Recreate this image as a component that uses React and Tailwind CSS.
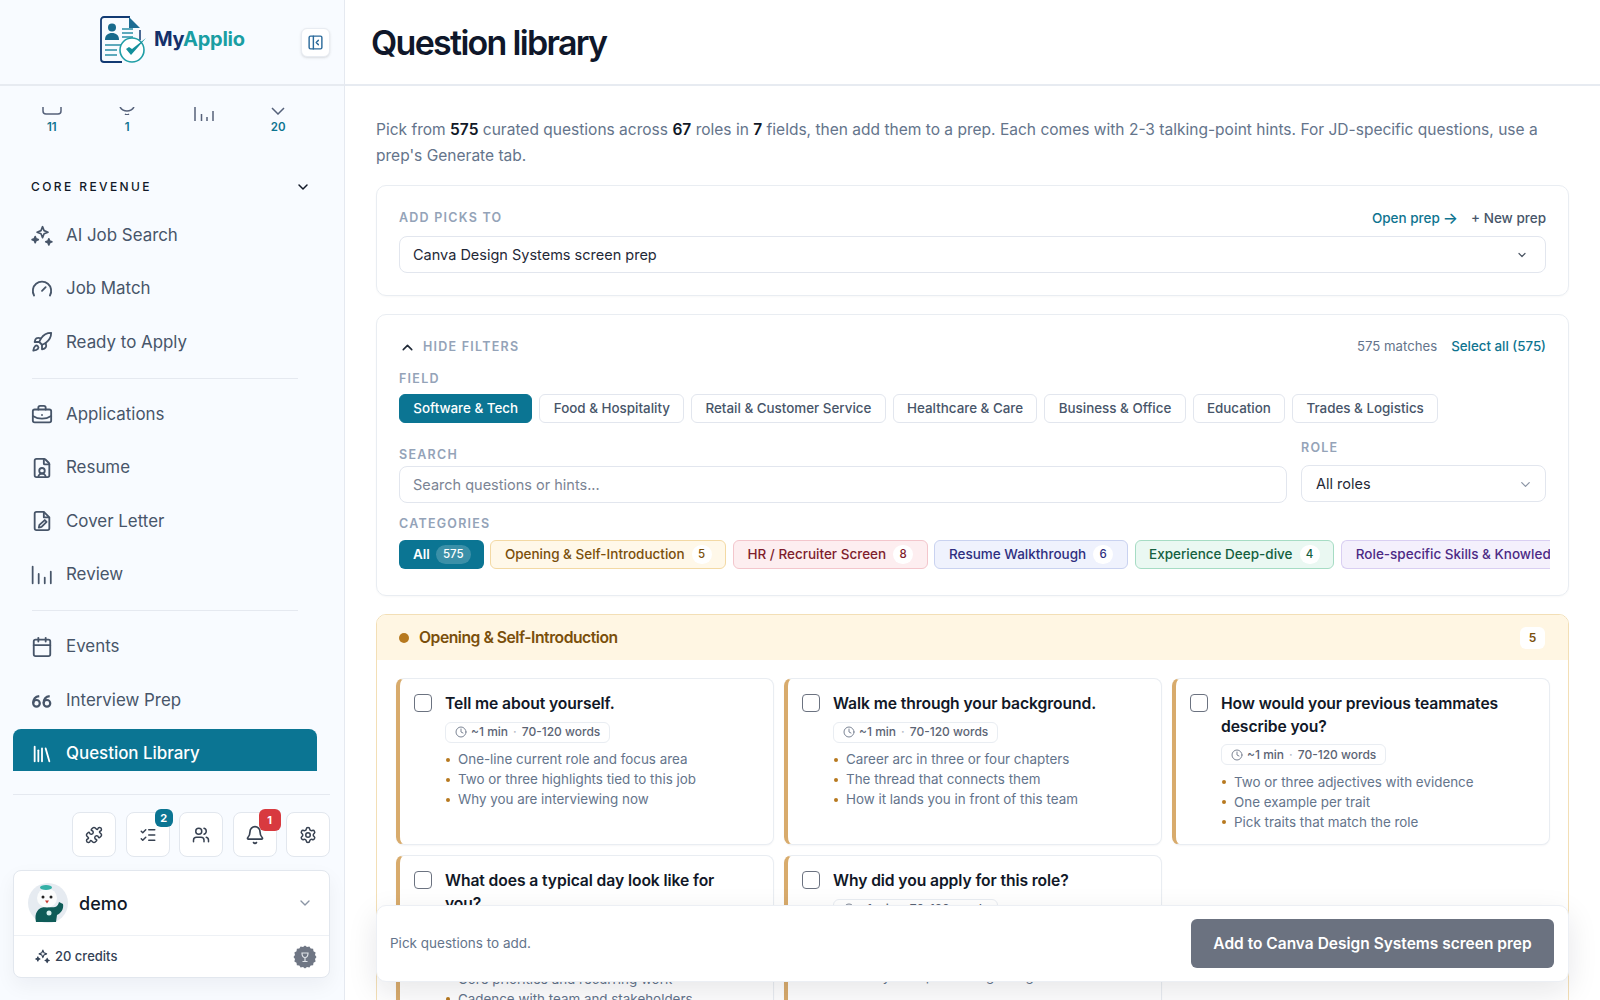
import {
  Rocket,
  Gauge,
  BriefcaseBusiness,
  FileUser,
  Calendar,
  Library,
  Puzzle,
  ListChecks,
  Users,
  Bell,
  Settings,
  ChevronDown,
  ChevronUp,
  PanelLeftClose,
  Clock,
} from 'lucide-react';

function Sparks({ size = 20, className = '' }) {
  return (
    <svg width={size} height={size} viewBox="0 0 20 20" fill="none" stroke="currentColor" strokeWidth="1.5" strokeLinejoin="round" className={className}>
      <path d="M10.5 1.5l1.4 3.6 3.6 1.4-3.6 1.4-1.4 3.6-1.4-3.6-3.6-1.4 3.6-1.4z" />
      <path d="M3.8 10.5l.8 2 2 .8-2 .8-.8 2-.8-2-2-.8 2-.8z" fill="currentColor" />
      <path d="M16.2 12.5l.8 2 2 .8-2 .8-.8 2-.8-2-2-.8 2-.8z" fill="currentColor" />
    </svg>
  );
}

function Bars({ size = 20, className = '' }) {
  return (
    <svg width={size} height={size} viewBox="0 0 20 20" fill="none" stroke="currentColor" strokeWidth="1.6" strokeLinecap="round" className={className}>
      <path d="M1.5 2.5v15" />
      <path d="M7 9v8.5" />
      <path d="M12.5 12.5v5" />
      <path d="M18 7v10.5" />
    </svg>
  );
}

function Quotes({ size = 20, className = '' }) {
  return (
    <svg width={size} height={size} viewBox="0 0 20 20" fill="none" stroke="currentColor" strokeWidth="2" className={className}>
      <circle cx="5" cy="13" r="3" />
      <path d="M2 13c0-4 1.500-6 5.500-6.500" />
      <circle cx="14.500" cy="13" r="3" />
      <path d="M11.500 13c0-4 1.500-6 5.500-6.500" />
    </svg>
  );
}

function CoverDoc({ size = 20, className = '' }) {
  return (
    <svg width={size} height={size} viewBox="0 0 24 24" fill="none" stroke="currentColor" strokeWidth="2" strokeLinejoin="round" className={className}>
      <path d="M14 2H6a2 2 0 0 0-2 2v16a2 2 0 0 0 2 2h12a2 2 0 0 0 2-2V8z" />
      <path d="M14 2v6h6" />
      <path d="M15 11l2 2-5.500 5.500-3 .7.700-3z" />
    </svg>
  );
}

function Logo() {
  return (
    <svg width="48" height="48" viewBox="0 0 48 48" fill="none">
      <path d="M31 1H5a3 3 0 0 0-3 3v39a3 3 0 0 0 3 3h18" stroke="#123a73" strokeWidth="1.800" />
      <path d="M30 1l11 11H30z" fill="#1c6c93" />
      <path d="M41 14v10" stroke="#123a73" strokeWidth="1.500" />
      <circle cx="13" cy="11.500" r="4" fill="#176a8c" />
      <path d="M6 24c0-5 3-7 7-7s7 2 7 7z" fill="#176a8c" />
      <path d="M23 13h11M23 17h11M23 21h11M6 29h17M6 34h12M6 39h12" stroke="#2a8fa6" strokeWidth="1.500" />
      <circle cx="33" cy="34" r="12" stroke="#1f9ea6" strokeWidth="1.600" fill="#fff" />
      <path d="M27 33l5 6 15-17-14 11-3-2z" fill="#14909b" />
    </svg>
  );
}

function Mascot() {
  return (
    <svg width="40" height="40" viewBox="0 0 40 40">
      <circle cx="20" cy="20" r="20" fill="#e6ebf1" />
      <path d="M8 39c-2-9 2-15 10-15s11 2 13-5l4 2c1 5-2 9-6 11l-1 7z" fill="#0f5c58" />
      <circle cx="21" cy="30" r="2.500" fill="#d8f1ee" />
      <ellipse cx="19" cy="15" rx="10" ry="9.500" fill="#fbfcfc" />
      <ellipse cx="18" cy="4.500" rx="6" ry="2.500" fill="#34b0a6" />
      <circle cx="15" cy="14" r="1.500" fill="#222" />
      <circle cx="23" cy="14" r="1.500" fill="#222" />
      <path d="M17 17.500h4l-2 3z" fill="#c8392f" />
    </svg>
  );
}

function Seal() {
  const pts = [];
  for (let i = 0; i < 32; i++) {
    const r = i % 2 ? 10.200 : 11.500;
    const a = (i * Math.PI) / 16;
    pts.push(`${12 + r * Math.cos(a)},${12 + r * Math.sin(a)}`);
  }
  return (
    <svg width="24" height="24" viewBox="0 0 24 24">
      <polygon points={pts.join(' ')} fill="#6f7684" />
      <path d="M9 8h6c0 3-1 4.500-3 4.500S9 11 9 8zM12 12.500V16M9.500 16.500h5" fill="none" stroke="#dfe3e8" strokeWidth="1.200" />
    </svg>
  );
}

const navGroups = [
  [
    { label: 'AI Job Search', icon: Sparks },
    { label: 'Job Match', icon: Gauge },
    { label: 'Ready to Apply', icon: Rocket },
  ],
  [
    { label: 'Applications', icon: BriefcaseBusiness },
    { label: 'Resume', icon: FileUser },
    { label: 'Cover Letter', icon: CoverDoc },
    { label: 'Review', icon: Bars },
  ],
  [
    { label: 'Events', icon: Calendar },
    { label: 'Interview Prep', icon: Quotes },
    { label: 'Question Library', icon: Library, active: true },
  ],
];

const fields = ['Software & Tech', 'Food & Hospitality', 'Retail & Customer Service', 'Healthcare & Care', 'Business & Office', 'Education', 'Trades & Logistics'];

const categories = [
  { label: 'Opening & Self-Introduction', count: 5, cls: 'bg-[#fff8e9] border-[#f3d9a4] text-[#7a4f0b]' },
  { label: 'HR / Recruiter Screen', count: 8, cls: 'bg-[#fdeef0] border-[#f3c6cc] text-[#7f1d2d]' },
  { label: 'Resume Walkthrough', count: 6, cls: 'bg-[#eff2fd] border-[#c9d2f0] text-[#2e2f7f]' },
  { label: 'Experience Deep-dive', count: 4, cls: 'bg-[#eaf8f2] border-[#a6dcc4] text-[#14603f]' },
];

const questions = [
  { title: 'Tell me about yourself.', hints: ['One-line current role and focus area', 'Two or three highlights tied to this job', 'Why you are interviewing now'] },
  { title: 'Walk me through your background.', hints: ['Career arc in three or four chapters', 'The thread that connects them', 'How it lands you in front of this team'] },
  { title: 'How would your previous teammates describe you?', hints: ['Two or three adjectives with evidence', 'One example per trait', 'Pick traits that match the role'] },
  { title: 'What does a typical day look like for you?', hints: ['Main focus and daily rhythm', 'Core priorities and recurring work', 'Cadence with team and stakeholders'] },
  { title: 'Why did you apply for this role?', hints: ['What stands out about the team', 'Where your skills fit the work', 'What you hope to bring and gain'] },
];

function Sidebar() {
  return (
    <aside className="w-[345px] shrink-0 h-full flex flex-col bg-[#f8fbff] border-r border-[#e5e9f0]">
      <div className="h-[86px] shrink-0 border-b-2 border-[#e7ebf1] flex items-center pl-[99px] pr-[14px]">
        <div className="-mt-[5px]"><Logo /></div>
        <div className="ml-[7px] -mt-[6px] text-[20px] font-bold tracking-[-0.25px]">
          <span className="text-[#14306b]">My</span>
          <span className="text-[#1a9ea3]">Applio</span>
        </div>
        <button className="ml-auto w-[29px] h-[29px] rounded-md bg-white border border-[#e8ecf2] shadow-sm flex items-center justify-center text-[#2b6a9b]">
          <PanelLeftClose size={17} />
        </button>
      </div>

      <div className="h-[685px] shrink-0 overflow-hidden">
        <div className="pt-[21px] px-[14px] w-[330px] grid grid-cols-4 text-[#0e7490]">
          <div className="flex flex-col items-center gap-[4px]">
            <svg width="20" height="8" viewBox="0 0 20 8" fill="none" stroke="#55617a" strokeWidth="1.500"><path d="M1 0v4a3 3 0 0 0 3 3h12a3 3 0 0 0 3-3V0" /></svg>
            <span className="text-[11.5px] leading-4 font-semibold">11</span>
          </div>
          <div className="flex flex-col items-center gap-[4px]">
            <svg width="16" height="8" viewBox="0 0 16 8" fill="none" stroke="#55617a" strokeWidth="1.500"><path d="M1 0c2 3 4.500 4 7 4s5-1 7-4" /><path d="M6 7c1 .7 3 .7 4 0" /></svg>
            <span className="text-[11.5px] leading-4 font-semibold">1</span>
          </div>
          <div className="flex flex-col items-center h-[28px] pl-[2px]">
            <svg width="20" height="14" viewBox="0 0 20 14" fill="none" stroke="#55617a" strokeWidth="1.500"><path d="M1 0v14M7.500 7v7M13 10v4M19 4v10" /></svg>
          </div>
          <div className="flex flex-col items-center gap-[4px]">
            <svg width="14" height="8" viewBox="0 0 14 8" fill="none" stroke="#55617a" strokeWidth="1.500"><path d="M1 1l6 6 6-6" /></svg>
            <span className="text-[11.5px] leading-4 font-semibold">20</span>
          </div>
        </div>

        <div className="mt-[42px] mb-[12px] h-[20px] pl-[31px] pr-[33px] flex items-center justify-between">
          <span className="text-[12px] font-medium tracking-[0.2em] text-[#111827]">CORE REVENUE</span>
          <ChevronDown size={16} className="text-[#111827]" strokeWidth={2.200} />
        </div>

        {navGroups.map((group, i) => (
          <div key={i}>
            {i > 0 && <div className="h-px bg-[#e5e9f0] ml-[32px] w-[266px] my-[9px]" />}
            {group.map(({ label, icon: Icon, active }) => (
              <div key={label} className="h-[53.33px] flex items-center">
                <div className={`ml-[13px] w-[304px] h-[50px] pl-[19px] flex items-center gap-[14px] text-[16.9px] rounded-t-lg ${active ? 'bg-[#0b7593] text-white font-medium' : 'text-[#475569]'}`}>
                  <span className="w-[20px] h-[20px] shrink-0 flex items-center justify-center">
                    <Icon size={22} className="shrink-0" />
                  </span>
                  {label}
                </div>
              </div>
            ))}
          </div>
        ))}
      </div>

      <div className="px-[13px] pr-[14px]">
        <div className="mt-[23px] h-px bg-[#e5e9f0]" />
        <div className="mt-[17px] flex justify-end gap-[9.4px]">
          {[Puzzle, ListChecks, Users, Bell, Settings].map((Icon, i) => (
            <div key={i} className="relative w-[44px] h-[45px] rounded-lg bg-white border border-[#e2e7ee] flex items-center justify-center text-[#374151]">
              <Icon size={i === 3 ? 20 : 18} />
              {i === 1 && (
                <span className="absolute -top-[4px] right-[-4px] w-[18px] h-[18px] rounded-md bg-[#0b7593] text-white text-[11px] font-bold flex items-center justify-center">2</span>
              )}
              {i === 3 && (
                <span className="absolute -top-[4px] right-[-5px] w-[22px] h-[22px] rounded-md bg-[#d83a3f] text-white text-[11px] font-bold flex items-center justify-center">1</span>
              )}
            </div>
          ))}
        </div>
        <div className="mt-[13px] h-[108px] rounded-lg bg-white border border-[#e2e7ee] shadow-[0_8px_20px_rgba(15,23,42,0.05)]">
          <div className="h-[65px] border-b border-[#eef1f5] pl-[14px] pr-[16px] flex items-center">
            <Mascot />
            <span className="ml-[11px] mt-[1px] text-[18px] font-medium text-[#111827]">demo</span>
            <ChevronDown size={16} className="ml-auto text-[#8b95a5]" />
          </div>
          <div className="h-[41px] pl-[21px] pr-[12px] flex items-center gap-[5px] text-[13px] font-medium text-[#334155]">
            <Sparks size={15} />
            <span>20 credits</span>
            <span className="ml-auto"><Seal /></span>
          </div>
        </div>
      </div>
    </aside>
  );
}

function Label({ children }) {
  return <div className="h-4 text-[12.5px] leading-4 font-semibold tracking-[0.1em] text-[#94a3b8]">{children}</div>;
}

function QuestionCard({ title, hints }) {
  return (
    <div className="bg-white rounded-lg border border-[#e9edf2] border-l-4 border-l-[#d8ab6c] pt-[13px] pl-[13.5px] pr-[30px] pb-[12px] flex gap-[13.5px] shadow-[0_1px_2px_rgba(15,23,42,0.04)]">
      <div className="w-[18px] h-[18px] mt-[2px] shrink-0 rounded-[4px] border-[1.5px] border-[#6b7280] bg-white" />
      <div className="min-w-0">
        <div className="pt-[1px] text-[15.7px] leading-[22.5px] font-semibold text-[#111827] tracking-[-0.1px]">{title}</div>
        <div className="mt-[6px] h-[21px] w-fit flex items-center gap-[4px] px-[9px] rounded-md border border-[#e9edf2] text-[12px] font-medium text-[#5b6474] whitespace-nowrap">
          <Clock size={12} className="text-[#7c8595]" />
          ~1 min
          <span className="text-[#b6bcc7] mx-[1px]">·</span>
          70-120 words
        </div>
        <ul className="mt-[7px]">
          {hints.map((hint) => (
            <li key={hint} className="h-[20px] flex items-center text-[13.4px] text-[#64748b] whitespace-nowrap">
              <span className="w-[4px] h-[4px] rounded-full bg-[#b7791f] ml-[1px] mr-[8px] shrink-0" />
              {hint}
            </li>
          ))}
        </ul>
      </div>
    </div>
  );
}

export default function App() {
  return (
    <div className="w-full h-screen flex overflow-hidden bg-white font-[Inter,sans-serif]">
      <Sidebar />
      <main className="relative flex-1 min-w-0 h-full overflow-hidden flex flex-col">
        <header className="h-[86px] shrink-0 border-b-2 border-[#e7ebf1] pl-[26px] flex items-center">
          <h1 className="text-[34px] font-semibold tracking-[-0.05em] text-[#0f172a]">Question library</h1>
        </header>

        <div className="px-[31px] pt-[31px]">
          <p className="text-[15.54px] leading-[26px] text-[#64748b]">
            Pick from <b className="font-semibold text-[#111827]">575</b> curated questions across <b className="font-semibold text-[#111827]">67</b> roles in <b className="font-semibold text-[#111827]">7</b> fields, then add them to a prep. Each comes with 2-3 talking-point hints. For JD-specific questions, use a prep's Generate tab.
          </p>

          <section className="mt-[16px] rounded-[10px] border border-[#e9edf2] p-[22px] shadow-[0_1px_2px_rgba(15,23,42,0.03)]">
            <div className="h-[20px] flex items-center justify-between">
              <Label>ADD PICKS TO</Label>
              <div className="flex items-center gap-[13px] text-[13.5px] font-medium">
                <span className="text-[#0e7490] flex items-center gap-[3px]">Open prep <span className="text-[16px] leading-4">→</span></span>
                <span className="text-[#475569]">+ New prep</span>
              </div>
            </div>
            <div className="mt-[8px] h-[37px] rounded-lg border border-[#e2e6ee] pl-[13px] pr-[17px] pt-[1px] flex items-center justify-between text-[14.5px] text-[#1f2937]">
              Canva Design Systems screen prep
              <ChevronDown size={12} className="text-[#4b5563]" strokeWidth={2.400} />
            </div>
          </section>

          <section className="mt-[18px] rounded-[10px] border border-[#e9edf2] pt-[22px] px-[22px] pb-[26px] shadow-[0_1px_2px_rgba(15,23,42,0.03)]">
            <div className="h-[20px] flex items-center">
              <ChevronUp size={17} className="text-[#1f2937]" strokeWidth={2.200} />
              <span className="ml-[7px] text-[12.5px] font-semibold tracking-[0.1em] text-[#94a3b8]">HIDE FILTERS</span>
              <span className="ml-auto text-[13.2px] text-[#64748b]">575 matches</span>
              <span className="ml-[14px] text-[13.3px] font-medium text-[#0e7490]">Select all (575)</span>
            </div>

            <div className="mt-[14px]"><Label>FIELD</Label></div>
            <div className="mt-[7px] flex gap-[7px]">
              {fields.map((f, i) => (
                <span key={f} className={`h-[29px] px-[13.3px] flex items-center rounded-md border text-[13.4px] font-medium ${i === 0 ? 'bg-[#0b7593] border-[#0b7593] text-white' : 'bg-white border-[#e2e6ee] text-[#475569]'}`}>{f}</span>
              ))}
            </div>

            <div className="mt-[17px] flex items-end gap-[14px]">
              <div className="flex-1">
                <div className="translate-y-[1px]"><Label>SEARCH</Label></div>
                <div className="mt-[4px] h-[37px] rounded-lg border border-[#e2e6ee] px-[13px] flex items-center text-[14.5px] text-[#7b8494]">Search questions or hints...</div>
              </div>
              <div className="w-[245px] mb-px">
                <Label>ROLE</Label>
                <div className="mt-[9px] h-[37px] rounded-lg border border-[#e2e6ee] pl-[14px] pr-[12px] pt-[1px] flex items-center justify-between text-[14.5px] text-[#1f2937]">
                  All roles
                  <ChevronDown size={15} className="text-[#8b95a5]" />
                </div>
              </div>
            </div>

            <div className="mt-[13px]"><Label>CATEGORIES</Label></div>
            <div className="mt-[8px] -mr-[4px] flex gap-[6.8px] overflow-hidden">
              <span className="h-[29px] pl-[14px] pr-[13px] shrink-0 flex items-center gap-[6px] rounded-md bg-[#0b7593] text-white text-[13.5px] font-semibold">
                All
                <span className="h-[19px] px-[7px] rounded-full bg-white/20 text-[11.5px] font-medium flex items-center">575</span>
              </span>
              {categories.map((c) => (
                <span key={c.label} className={`h-[29px] pl-[13.500px] pr-[13.500px] shrink-0 flex items-center gap-[7px] rounded-md border text-[13.5px] font-medium ${c.cls}`}>
                  {c.label}
                  <span className="w-[20px] h-[19px] rounded-full bg-white text-[11.5px] font-medium flex items-center justify-center">{c.count}</span>
                </span>
              ))}
              <span className="h-[29px] pl-[14px] pr-[14px] shrink-0 flex items-center rounded-l-md border border-r-0 border-[#d9cff2] bg-[#f4f0fc] text-[13.5px] font-medium text-[#4c2a85] whitespace-nowrap">
                Role-specific Skills &amp; Knowledge
              </span>
            </div>
          </section>

          <section className="mt-[18px] rounded-t-[10px] border border-[#f3dfb6]">
            <div className="h-[45px] rounded-t-[9px] bg-[#fff6e3] pl-[22px] pr-[23px] flex items-center">
              <span className="w-[10px] h-[10px] rounded-full bg-[#b7791f]" />
              <span className="ml-[10px] mt-[1px] text-[15.7px] font-semibold tracking-[-0.03em] text-[#7a4f0b]">Opening &amp; Self-Introduction</span>
              <span className="ml-auto w-[25px] h-[22px] rounded-md bg-white text-[12px] font-semibold text-[#7a4f0b] flex items-center justify-center">5</span>
            </div>
            <div className="pt-[18px] pl-[19px] pr-[18px] grid grid-cols-3 gap-[10px]">
              {questions.map((q) => (
                <QuestionCard key={q.title} {...q} />
              ))}
            </div>
          </section>
        </div>

        <div className="absolute left-[31px] right-[31px] bottom-[18px] h-[77px] rounded-[10px] bg-white border border-[#eceff4] pl-[13px] pr-[14px] flex items-center justify-between shadow-[0_10px_30px_rgba(15,23,42,0.10)]">
          <span className="text-[13.5px] text-[#64748b]">Pick questions to add.</span>
          <button className="h-[49px] w-[363px] rounded-md bg-[#6b7280] text-white text-[15.5px] font-semibold">Add to Canva Design Systems screen prep</button>
        </div>
      </main>
    </div>
  );
}
